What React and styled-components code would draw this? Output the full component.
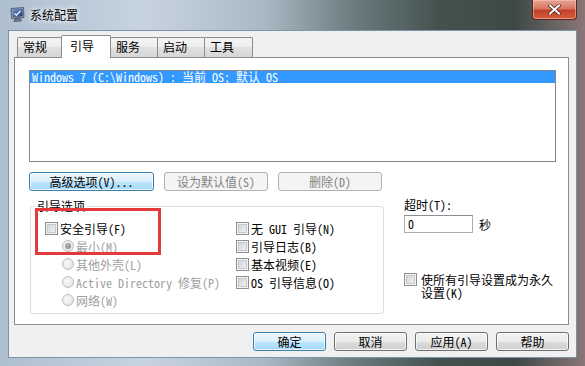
import React from "react";
import styled, { createGlobalStyle } from "styled-components";

const GlobalStyle = createGlobalStyle`
  * { box-sizing: border-box; }
  html, body {
    margin: 0;
    padding: 0;
    width: 585px;
    height: 366px;
    overflow: hidden;
    background: #3a4644;
  }
  body {
    font-family: "Noto Sans Mono CJK SC", "Noto Sans CJK SC", "Liberation Mono", monospace;
    font-size: 12px;
    color: #000;
  }
`;

const Window = styled.div`
  width: 585px;
  height: 366px;
  display: flex;
  flex-direction: column;
  background: linear-gradient(90deg, #aebfd0 0%, #c7d4e0 25%, #aab9c4 45%, #6d7e82 60%, #44524f 75%, #3d4947 88%, #8b7677 100%);
`;

const TitleBar = styled.div`
  height: 30px;
  flex-shrink: 0;
  display: flex;
  align-items: flex-start;
  padding-left: 9px;
`;

const AppIcon = styled.svg`
  margin-top: 6px;
  width: 17px;
  height: 17px;
`;

const Caption = styled.div`
  margin: 7px 0 0 4px;
  font-family: "Noto Sans CJK SC", sans-serif;
  font-size: 12px;
  line-height: 16px;
  color: #000;
  text-shadow: 0 0 4px #fff, 0 0 6px #fff;
`;

const CloseButton = styled.div`
  margin-left: auto;
  margin-right: 8px;
  width: 45px;
  height: 20px;
  border: 1px solid #5b2a26;
  border-top: none;
  border-radius: 0 0 4px 4px;
  background: linear-gradient(#e7a597, #d8765f 45%, #c3402a 55%, #d4603f);
  box-shadow: inset 0 0 0 1px rgba(255, 200, 190, 0.5);
  display: flex;
  align-items: center;
  justify-content: center;
`;

const Frame = styled.div`
  flex: 1;
  display: flex;
  padding: 0 8px 8px;
`;

const Client = styled.div`
  flex: 1;
  display: flex;
  flex-direction: column;
  background: #f0f0f0;
  border: 1px solid #7f93a6;
  padding: 4px 7px 0 5px;
`;

const TabStrip = styled.div`
  height: 23px;
  display: flex;
  align-items: flex-end;
  padding-left: 3px;
  margin-bottom: -1px;
  position: relative;
  z-index: 1;
`;

const Tab = styled.div`
  width: ${(p) => p.$w}px;
  height: ${(p) => (p.$active ? 23 : 20)}px;
  margin-bottom: ${(p) => (p.$active ? 0 : 1)}px;
  margin-left: ${(p) => (p.$first ? 0 : -1)}px;
  padding-left: ${(p) => (p.$active ? 8 : 5)}px;
  line-height: ${(p) => (p.$active ? 20 : 18)}px;
  border: 1px solid #898c95;
  border-bottom: none;
  border-radius: 2px 2px 0 0;
  background: ${(p) =>
    p.$active ? "#fff" : "linear-gradient(#f5f5f5, #ececec 50%, #e1e1e1 50%, #d6d6d6)"};
  position: relative;
  z-index: ${(p) => (p.$active ? 2 : 1)};
`;

const Panel = styled.div`
  height: 268px;
  background: #fff;
  border: 1px solid #898c95;
  padding: 12px 12px 0 14px;
`;

const ListBox = styled.div`
  width: 527px;
  height: 92px;
  border: 1px solid #828790;
`;

const ListRow = styled.div`
  height: 12px;
  line-height: 12px;
  padding-left: 2px;
  background: #3399ff;
  color: #fff;
  white-space: pre;
`;

const ButtonRow = styled.div`
  display: flex;
  gap: 10px;
  margin-top: 10px;
`;

const Button = styled.div`
  width: ${(p) => p.$w}px;
  height: 19px;
  line-height: 17px;
  text-align: center;
  border-radius: 3px;
  white-space: pre;
  border: 1px solid
    ${(p) => (p.$kind === "default" ? "#3c7fb1" : p.$kind === "disabled" ? "#adb2b5" : "#707070")};
  color: ${(p) => (p.$kind === "disabled" ? "#838383" : "#000")};
  background: ${(p) =>
    p.$kind === "default"
      ? "linear-gradient(#eaf6fd, #d9f0fc 50%, #bee6fd 50%, #a7d9f5)"
      : p.$kind === "disabled"
      ? "#f4f4f4"
      : "linear-gradient(#f2f2f2, #ebebeb 50%, #dddddd 50%, #cfcfcf)"};
  box-shadow: inset 0 0 0 1px ${(p) => (p.$kind === "disabled" ? "#f4f4f4" : "rgba(255,255,255,0.7)")};
`;

const Lower = styled.div`
  position: relative;
  display: flex;
  margin-top: 8px;
`;

const Group = styled.fieldset`
  margin: 0 0 0 1px;
  padding: 0;
  width: 354px;
  height: 115px;
  border: 1px solid #d5dfe5;
  border-radius: 3px;
`;

const GroupLabel = styled.legend`
  margin-left: 4px;
  padding: 0 2px;
  line-height: 14px;
`;

const OptionGrid = styled.div`
  display: grid;
  grid-template-columns: 191px 1fr;
  grid-auto-rows: 18px;
  margin-top: 6px;
  padding-left: 14px;
`;

const Option = styled.div`
  display: flex;
  align-items: center;
  gap: 2px;
  margin-left: ${(p) => (p.$indent ? 17 : 0)}px;
  color: ${(p) => (p.$disabled ? "#a0a0a0" : "#000")};
  white-space: pre;
`;

const CheckBox = styled.span`
  width: 13px;
  height: 13px;
  flex-shrink: 0;
  border: 1px solid #8e8f8f;
  background: linear-gradient(135deg, #cbcfd5, #f6f6f6);
  box-shadow: inset 0 0 0 1px #f4f4f4, inset 0 0 0 2px #c4c8cc;
`;

const Radio = styled.span`
  width: 12px;
  height: 12px;
  flex-shrink: 0;
  border-radius: 50%;
  border: 1px solid #c0c0c0;
  background: radial-gradient(circle at 40% 40%, #fafafa, #dcdcdc);
  display: flex;
  align-items: center;
  justify-content: center;
  &::after {
    content: "";
    display: ${(p) => (p.$checked ? "block" : "none")};
    width: 6px;
    height: 6px;
    border-radius: 50%;
    background: radial-gradient(circle at 40% 40%, #b8b8b8, #7d7d7d);
  }
`;

const Highlight = styled.div`
  position: absolute;
  left: 6px;
  top: 9px;
  width: 126px;
  height: 47px;
  border: 3px solid #e33b3b;
  pointer-events: none;
`;

const SideColumn = styled.div`
  margin-left: 20px;
  width: 152px;
  display: flex;
  flex-direction: column;
`;

const FieldLabel = styled.div`
  line-height: 12px;
`;

const TimeoutRow = styled.div`
  display: flex;
  align-items: center;
  gap: 6px;
  margin-top: 4px;
`;

const TextInput = styled.div`
  width: 69px;
  height: 18px;
  line-height: 16px;
  padding-left: 3px;
  border: 1px solid #abadb3;
  border-top-color: #8a8e96;
  background: #fff;
`;

const PermanentRow = styled.div`
  display: flex;
  align-items: flex-start;
  gap: 4px;
  margin-top: 40px;
`;

const WrapText = styled.div`
  width: 134px;
  line-height: 13px;
`;

const Footer = styled.div`
  display: flex;
  justify-content: flex-end;
  gap: 8px;
  margin-top: 7px;
`;

const tabs = [
  { label: "常规", w: 45 },
  { label: "引导", w: 50, active: true },
  { label: "服务", w: 48 },
  { label: "启动", w: 48 },
  { label: "工具", w: 49 },
];

const App = () => {
  return (
    <>
      <GlobalStyle />
      <Window>
        <TitleBar>
          <AppIcon viewBox="0 0 17 17">
            <defs>
              <linearGradient id="scr" x1="0" y1="0" x2="1" y2="1">
                <stop offset="0" stopColor="#6d8fc9" />
                <stop offset="1" stopColor="#1d3b7a" />
              </linearGradient>
            </defs>
            <path d="M2 2.5 L14.5 1.5 L15 11.5 L2.5 12.5 Z" fill="#8d98a6" stroke="#4a5360" strokeWidth="0.8" />
            <path d="M3.6 3.6 L13.4 2.9 L13.8 10.3 L4 11 Z" fill="url(#scr)" />
            <path d="M5.5 7.5 L7.5 9.3 L11.5 4.8" fill="none" stroke="#e8eef8" strokeWidth="1.3" />
            <path d="M6 12.5 L11 12.1 L12.5 15 L4.8 15.5 Z" fill="#6f7a88" stroke="#3f4752" strokeWidth="0.6" />
          </AppIcon>
          <Caption>系统配置</Caption>
          <CloseButton>
            <svg width="13" height="11" viewBox="0 0 13 11">
              <path d="M2 1.5 L11 9.5 M11 1.5 L2 9.5" stroke="#4a1a14" strokeWidth="3.4" strokeLinecap="square" />
              <path d="M2 1.5 L11 9.5 M11 1.5 L2 9.5" stroke="#fff" strokeWidth="2" strokeLinecap="square" />
            </svg>
          </CloseButton>
        </TitleBar>
        <Frame>
          <Client>
            <TabStrip>
              {tabs.map((t, i) => (
                <Tab key={t.label} $w={t.w} $active={t.active} $first={i === 0}>
                  {t.label}
                </Tab>
              ))}
            </TabStrip>
            <Panel>
              <ListBox>
                <ListRow>Windows 7 (C:\Windows) : 当前 OS; 默认 OS</ListRow>
              </ListBox>
              <ButtonRow>
                <Button $w={125} $kind="default">高级选项(V)...</Button>
                <Button $w={104} $kind="disabled">设为默认值(S)</Button>
                <Button $w={104} $kind="disabled">删除(D)</Button>
              </ButtonRow>
              <Lower>
                <Group>
                  <GroupLabel>引导选项</GroupLabel>
                  <OptionGrid>
                    <Option><CheckBox />安全引导(F)</Option>
                    <Option><CheckBox />无 GUI 引导(N)</Option>
                    <Option $indent $disabled><Radio $checked />最小(M)</Option>
                    <Option><CheckBox />引导日志(B)</Option>
                    <Option $indent $disabled><Radio />其他外壳(L)</Option>
                    <Option><CheckBox />基本视频(E)</Option>
                    <Option $indent $disabled><Radio />Active Directory 修复(P)</Option>
                    <Option><CheckBox />OS 引导信息(O)</Option>
                    <Option $indent $disabled><Radio />网络(W)</Option>
                  </OptionGrid>
                </Group>
                <Highlight />
                <SideColumn>
                  <FieldLabel>超时(T):</FieldLabel>
                  <TimeoutRow>
                    <TextInput>0</TextInput>
                    <span>秒</span>
                  </TimeoutRow>
                  <PermanentRow>
                    <CheckBox />
                    <WrapText>使所有引导设置成为永久设置(K)</WrapText>
                  </PermanentRow>
                </SideColumn>
              </Lower>
            </Panel>
            <Footer>
              <Button $w={73} $kind="default">确定</Button>
              <Button $w={73}>取消</Button>
              <Button $w={73}>应用(A)</Button>
              <Button $w={73}>帮助</Button>
            </Footer>
          </Client>
        </Frame>
      </Window>
    </>
  );
};

export default App;
